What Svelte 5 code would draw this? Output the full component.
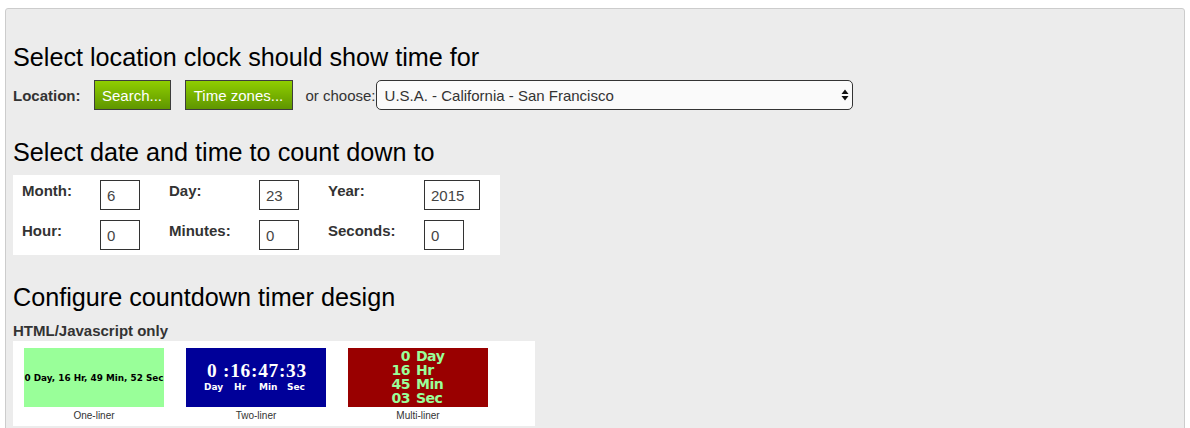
<script>
  let location = 'U.S.A. - California - San Francisco';
  const dateRows = [
    [
      { label: 'Month:', value: '6', wide: false },
      { label: 'Day:', value: '23', wide: false },
      { label: 'Year:', value: '2015', wide: true },
    ],
    [
      { label: 'Hour:', value: '0', wide: false },
      { label: 'Minutes:', value: '0', wide: false },
      { label: 'Seconds:', value: '0', wide: false },
    ],
  ];
  const multi = [
    ['0', 'Day'],
    ['16', 'Hr'],
    ['45', 'Min'],
    ['03', 'Sec'],
  ];
</script>

<div class="panel">
  <h2 class="first">Select location clock should show time for</h2>
  <div class="location">
    <b>Location:</b>
    <button class="green search">Search...</button>
    <button class="green zones">Time zones...</button>
    <span class="or">or choose:</span>
    <div class="picker">
      <select bind:value={location}>
        <option>U.S.A. - California - San Francisco</option>
      </select>
      <svg class="arrows" width="8" height="12" viewBox="0 0 8 12" aria-hidden="true">
        <path d="M4 0.5 L7.5 5 H0.5 Z M4 11.5 L7.5 7 H0.5 Z" fill="#111" />
      </svg>
    </div>
  </div>

  <h2 class="second">Select date and time to count down to</h2>
  <div class="dates">
    {#each dateRows as row}
      {#each row as field}
        <b>{field.label}</b>
        <input class:wide={field.wide} value={field.value} />
      {/each}
    {/each}
  </div>

  <h2 class="third">Configure countdown timer design</h2>
  <div class="sub"><b>HTML/Javascript only</b></div>
  <div class="designs">
    <figure>
      <div class="timer one">0 Day, 16 Hr, 49 Min, 52 Sec</div>
      <figcaption>One-liner</figcaption>
    </figure>
    <figure>
      <div class="timer two">
        <div class="clock">0 :16:47:33</div>
        <div class="units"><span>Day</span><span>Hr</span><span>Min</span><span>Sec</span></div>
      </div>
      <figcaption>Two-liner</figcaption>
    </figure>
    <figure>
      <div class="timer multi">
        {#each multi as line}
          <span class="num">{line[0]}</span><span>{line[1]}</span>
        {/each}
      </div>
      <figcaption>Multi-liner</figcaption>
    </figure>
  </div>
</div>

<style>
  :global(body) {
    background: #fff;
    overflow: hidden;
  }

  .panel {
    box-sizing: border-box;
    height: 440px;
    margin: 8px 5px 0;
    padding: 0 7px;
    background: #ececec;
    border: 1px solid #ccc;
    border-radius: 3px;
    font-family: 'Liberation Sans', Arial, sans-serif;
    font-size: 15px;
    color: #333;
    overflow: hidden;
  }

  h2 {
    margin: 0;
    font-size: 25.2px;
    line-height: 28px;
    font-weight: normal;
    color: #000;
  }
  h2.first {
    margin-top: 34px;
  }
  h2.second {
    margin-top: 28px;
  }
  h2.third {
    margin-top: 28px;
  }

  .location {
    display: flex;
    align-items: center;
    height: 30px;
    margin-top: 9px;
  }
  .green {
    box-sizing: border-box;
    height: 30px;
    padding: 0;
    border: 1px solid #3d3d3d;
    background: linear-gradient(#8fce00, #5f9600);
    color: #fff;
    font: 15px 'Liberation Sans', Arial, sans-serif;
  }
  .search {
    width: 77px;
    margin-left: 13px;
  }
  .zones {
    width: 108px;
    margin-left: 14px;
  }
  .or {
    margin-left: 13px;
  }
  .picker {
    position: relative;
    width: 477px;
    height: 30px;
  }
  select {
    box-sizing: border-box;
    width: 100%;
    height: 30px;
    padding: 0 8px;
    border: 1px solid #333;
    border-radius: 5px;
    background: #fafafa;
    color: #333;
    font: 15px 'Liberation Sans', Arial, sans-serif;
    appearance: none;
  }
  .arrows {
    position: absolute;
    top: 9px;
    right: 4px;
    pointer-events: none;
  }

  .dates {
    display: grid;
    grid-template-columns: 78px 69px 90px 69px 96px 1fr;
    grid-template-rows: 40px 40px;
    box-sizing: border-box;
    width: 487px;
    height: 80px;
    margin-top: 9px;
    padding-left: 9px;
    background: #fff;
  }
  .dates b {
    padding-top: 7px;
  }
  .dates input {
    box-sizing: border-box;
    width: 40px;
    height: 30px;
    margin-top: 5px;
    padding: 1px 0 0 6px;
    border: 1px solid #333;
    border-radius: 0;
    color: #444;
    font: 15px 'Liberation Sans', Arial, sans-serif;
  }
  .dates input.wide {
    width: 56px;
  }

  .sub {
    margin-top: 12px;
    line-height: 16px;
  }

  .designs {
    display: flex;
    gap: 22px;
    box-sizing: border-box;
    width: 522px;
    height: 85px;
    margin-top: 2px;
    padding: 7px 11px 0;
    background: #fff;
  }
  figure {
    width: 140px;
    margin: 0;
    text-align: center;
  }
  figcaption {
    margin-top: 2px;
    font-size: 10px;
    line-height: 14px;
  }
  .timer {
    box-sizing: border-box;
    height: 59px;
  }
  .one {
    display: flex;
    align-items: center;
    justify-content: center;
    background: #9f9;
    color: #000;
    font: bold 8.85px 'DejaVu Sans', sans-serif;
    white-space: nowrap;
  }
  .two {
    padding-top: 13px;
    background: #009;
    color: #fff;
  }
  .clock {
    padding-left: 2px;
    font: bold 19.4px/20px 'Liberation Serif', serif;
    letter-spacing: 0.7px;
  }
  .units {
    display: grid;
    grid-template-columns: 30px 25px 28px auto;
    padding-left: 18px;
    text-align: left;
    font: bold 9px/12px 'DejaVu Sans', sans-serif;
  }
  .multi {
    display: grid;
    grid-template-columns: 62px 1fr;
    grid-auto-rows: 14px;
    column-gap: 6px;
    padding-top: 1px;
    background: #900;
    color: #9f9;
    font: bold 14px/14px 'DejaVu Sans', sans-serif;
    letter-spacing: -0.5px;
    text-align: left;
  }
  .multi .num {
    text-align: right;
  }
</style>
